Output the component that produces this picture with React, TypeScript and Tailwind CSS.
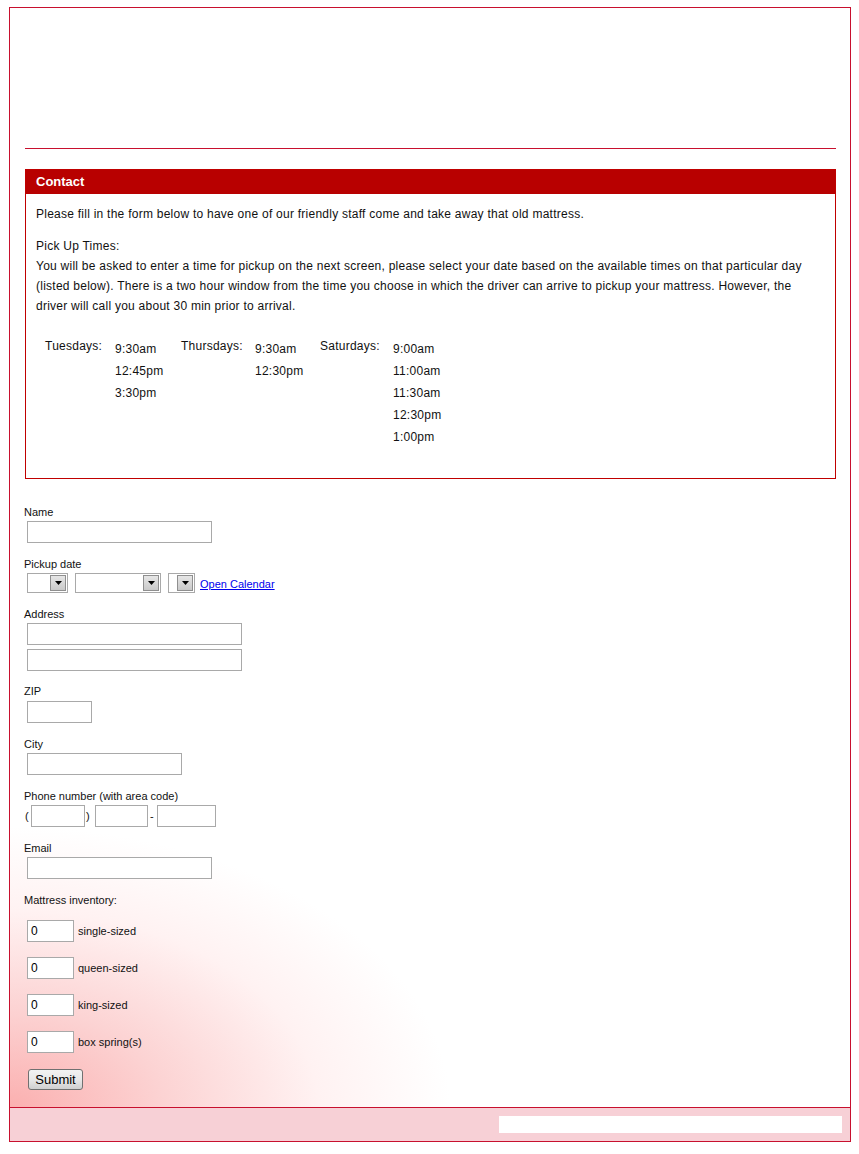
import React from "react";

const font = { fontFamily: '"Liberation Sans", Arial, sans-serif' };

function Label({ children, className = "" }: { children: React.ReactNode; className?: string }) {
  return <div className={`text-[11px] leading-[14px] h-[14px] text-[#111] -ml-[1px] ${className}`}>{children}</div>;
}

function TextInput({ w, className = "", value }: { w: string; className?: string; value?: string }) {
  return (
    <div className={`${w} h-[22px] border border-[#a9a9a9] bg-white text-[12px] leading-[20px] pl-[3px] text-black ${className}`}>
      {value}
    </div>
  );
}

function Select({ w }: { w: string }) {
  return (
    <div className={`${w} h-[20px] border border-[#a9a9a9] bg-white flex justify-end items-center pr-[1px]`}>
      <div className="w-[16px] h-[16px] border border-[#8f8f8f] bg-gradient-to-b from-[#e6e6e6] to-[#c9c9c9] flex items-center justify-center">
        <svg width="7" height="4" viewBox="0 0 7 4">
          <path d="M0 0 L7 0 L3.5 4 Z" fill="#000" />
        </svg>
      </div>
    </div>
  );
}

export default function App() {
  return (
    <div className="bg-white min-h-[1154px] pt-[7px] pl-[9px]" style={font}>
      <div className="w-[842px] border border-[#c8102e]">
        <div className="bg-[radial-gradient(ellipse_440px_280px_at_0%_100%,#fbb0b0_0%,#fcd3d3_35%,#fff2f2_70%,#ffffff_100%)] pl-[15px] pr-[14px] pb-[16px]">
          <div className="h-[141px] border-b border-[#c8102e]" />
          {/* Contact box */}
          <div className="mt-[20px] border border-[#c00000] h-[310px]">
            <div className="h-[24px] bg-[#b80000] text-white font-bold text-[13px] leading-[24px] pl-[10px]">Contact</div>
            <div className="px-[10px] text-[12px] leading-[20px] text-[#111] tracking-[0.25px]">
              <p className="mt-[10px] whitespace-nowrap">
                Please fill in the form below to have one of our friendly staff come and take away that old mattress.
              </p>
              <p className="mt-[12px] whitespace-nowrap">
                Pick Up Times:
                <br />
                You will be asked to enter a time for pickup on the next screen, please select your date based on the available times on that particular day
                <br />
                (listed below). There is a two hour window from the time you choose in which the driver can arrive to pickup your mattress. However, the
                <br />
                driver will call you about 30 min prior to arrival.
              </p>
              <div className="mt-[21px] ml-[9px] grid grid-cols-[70px_66px_74px_65px_73px_1fr] leading-[22px]">
                <div className="-mt-[2px]">Tuesdays:</div>
                <div className="mt-[1px]">
                  <div>9:30am</div>
                  <div>12:45pm</div>
                  <div>3:30pm</div>
                </div>
                <div className="-mt-[2px]">Thursdays:</div>
                <div className="mt-[1px]">
                  <div>9:30am</div>
                  <div>12:30pm</div>
                </div>
                <div className="-mt-[2px]">Saturdays:</div>
                <div className="mt-[1px]">
                  <div>9:00am</div>
                  <div>11:00am</div>
                  <div>11:30am</div>
                  <div>12:30pm</div>
                  <div>1:00pm</div>
                </div>
              </div>
            </div>
          </div>

          {/* Form */}
          <div className="pt-[26px]">
            <Label>Name</Label>
            <TextInput w="w-[185px]" className="mt-[2px] ml-[2px]" />

            <Label className="mt-[14px]">Pickup date</Label>
            <div className="mt-[2px] ml-[2px] flex items-center">
              <Select w="w-[41px]" />
              <div className="ml-[7px]">
                <Select w="w-[86px]" />
              </div>
              <div className="ml-[7px]">
                <Select w="w-[27px]" />
              </div>
              <a href="#" className="ml-[5px] text-[11px] text-[#0000ee] underline leading-[14px] mt-[1px]">
                Open Calendar
              </a>
            </div>

            <Label className="mt-[14px]">Address</Label>
            <TextInput w="w-[215px]" className="mt-[2px] ml-[2px]" />
            <TextInput w="w-[215px]" className="mt-[4px] ml-[2px]" />

            <Label className="mt-[13px]">ZIP</Label>
            <TextInput w="w-[65px]" className="mt-[3px] ml-[2px]" />

            <Label className="mt-[14px]">City</Label>
            <TextInput w="w-[155px]" className="mt-[2px] ml-[2px]" />

            <Label className="mt-[14px]">Phone number (with area code)</Label>
            <div className="mt-[2px] flex items-center text-[11px] text-[#111]">
              <span className="w-[6px]">(</span>
              <TextInput w="w-[54px]" />
              <span className="ml-[1px] w-[9px]">)</span>
              <TextInput w="w-[53px]" />
              <span className="ml-[2px] w-[7px]">-</span>
              <TextInput w="w-[59px]" />
            </div>

            <Label className="mt-[14px]">Email</Label>
            <TextInput w="w-[185px]" className="mt-[2px] ml-[2px]" />

            <Label className="mt-[14px]">Mattress inventory:</Label>
            <div className="mt-[13px] flex flex-col gap-[15px]">
              {["single-sized", "queen-sized", "king-sized", "box spring(s)"].map((t) => (
                <div key={t} className="flex items-center">
                  <TextInput w="w-[47px]" className="ml-[2px]" value="0" />
                  <span className="ml-[4px] text-[11px] text-[#111] mt-[1px]">{t}</span>
                </div>
              ))}
            </div>

            <button
              type="button"
              className="mt-[16px] ml-[3px] w-[55px] h-[21px] border border-[#707070] rounded-[3px] bg-gradient-to-b from-[#f2f2f2] via-[#e8e8e8] to-[#cfcfcf] text-[13px] leading-[19px] text-black"
            >
              Submit
            </button>
          </div>
        </div>
        <div className="h-[34px] border-t border-[#c8102e] bg-[#f7d0d6] flex justify-end pt-[8px] pr-[8px]">
          <div className="w-[343px] h-[17px] bg-white" />
        </div>
      </div>
    </div>
  );
}
